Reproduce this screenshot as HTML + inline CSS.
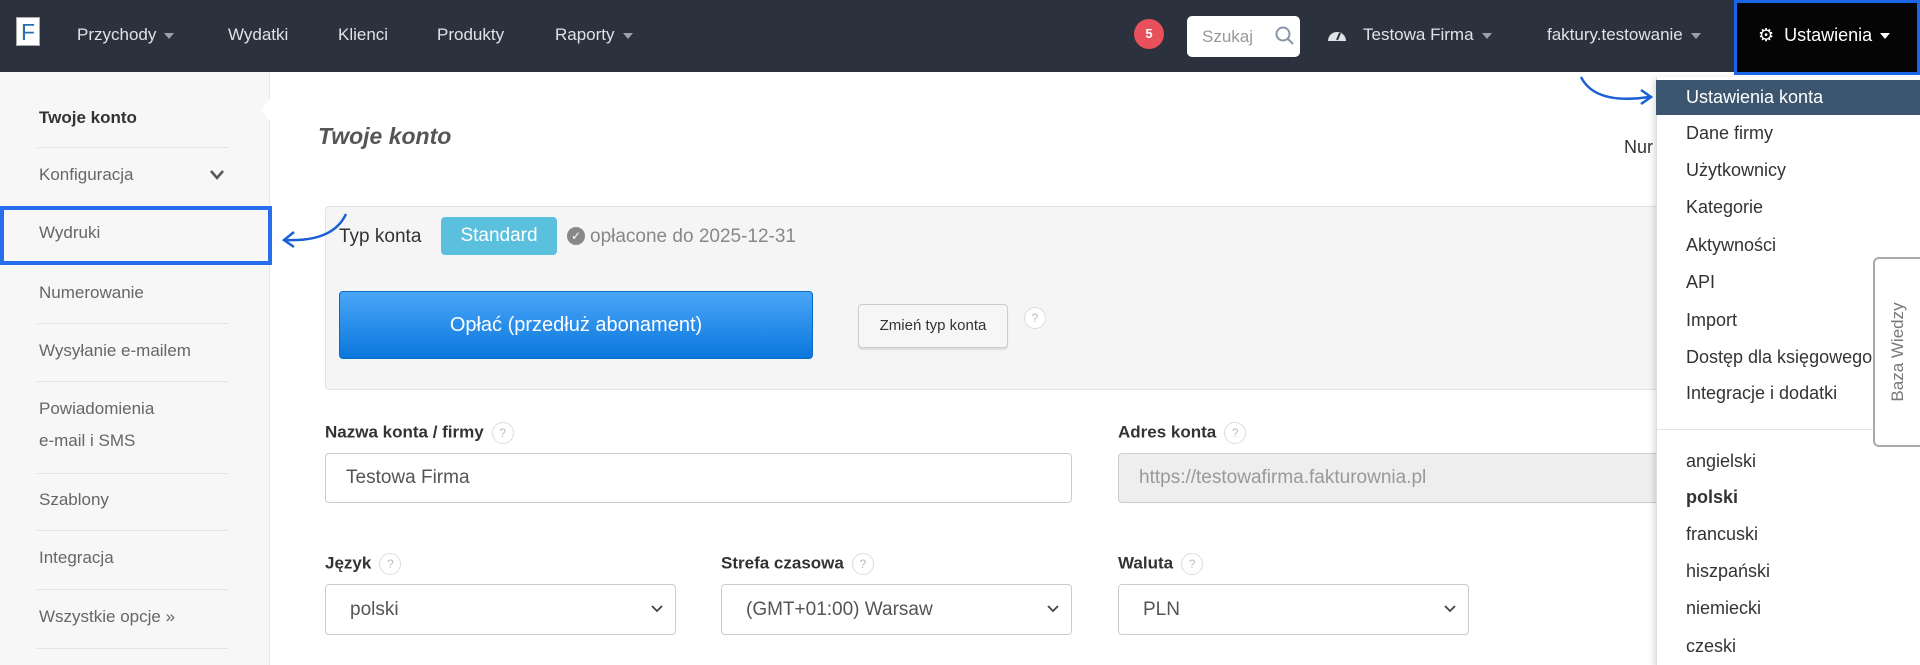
<!DOCTYPE html>
<html><head><meta charset="utf-8"><style>
*{box-sizing:border-box;margin:0;padding:0}
body{width:1920px;height:665px;overflow:hidden;background:#fff;font-family:"Liberation Sans",Arial,sans-serif;position:relative;color:#333}
.a{position:absolute;white-space:nowrap}
.nav{left:0;top:0;width:1920px;height:72px;background:#2b323d}
.nl{color:#dfe3e8;font-size:17px;top:25px}
.car{display:inline-block;border-left:5px solid transparent;border-right:5px solid transparent;border-top:6px solid #9aa1aa;margin-left:8px;vertical-align:middle}
.side{left:0;top:72px;width:270px;height:593px;background:#f7f7f7;border-right:1px solid #e6e6e6}
.si{left:39px;font-size:17px;color:#666}
.sep{left:37px;width:191px;height:1px;background:#e3e3e3}
.lbl{font-size:17px;font-weight:bold;color:#333}
.q{display:inline-block;width:22px;height:22px;border:1px solid #ddd;border-radius:50%;font-size:12px;color:#bbb;text-align:center;line-height:20px;font-weight:normal;margin-left:8px;vertical-align:middle}
.inp{border:1px solid #ccc;border-radius:4px;background:#fff;font-size:19px;color:#555;padding-left:20px}
.dd{color:#333;font-size:18px;left:1686px}
</style></head><body>
<div class="a nav"></div>
<div class="a" style="left:16px;top:17px;width:24px;height:29px;background:#fff;border:1px solid #aaa;color:#2a6fb0;font-size:23px;text-align:center;line-height:29px">F</div>
<div class="a nl" style="left:77px">Przychody<span class="car"></span></div>
<div class="a nl" style="left:228px">Wydatki</div>
<div class="a nl" style="left:338px">Klienci</div>
<div class="a nl" style="left:437px">Produkty</div>
<div class="a nl" style="left:555px">Raporty<span class="car"></span></div>
<div class="a" style="left:1134px;top:19px;width:30px;height:30px;border-radius:50%;background:#e8505b;color:#fff;font-weight:bold;font-size:13px;text-align:center;line-height:30px">5</div>
<div class="a" style="left:1187px;top:16px;width:113px;height:41px;background:#fff;border-radius:5px;color:#999;font-size:17px;padding:11px 0 0 15px">Szukaj</div>
<svg class="a" style="left:1275px;top:26px" width="20" height="20"><circle cx="8" cy="8" r="6.5" stroke="#8a95a5" stroke-width="2" fill="none"/><line x1="13" y1="13" x2="18" y2="18" stroke="#8a95a5" stroke-width="2"/></svg>
<svg class="a" style="left:1327px;top:26px" width="20" height="16"><path d="M1 15 A9 9 0 0 1 19 15 Z" fill="#dfe3e8"/><line x1="10" y1="14" x2="13" y2="7" stroke="#2b323d" stroke-width="2"/></svg>
<div class="a nl" style="left:1363px">Testowa Firma<span class="car"></span></div>
<div class="a nl" style="left:1547px">faktury.testowanie<span class="car"></span></div>
<div class="a" style="left:1734px;top:0;width:186px;height:75px;background:#050505;border:3px solid #1a66e6"></div>
<div class="a" style="left:1758px;top:25px;color:#fff;font-size:18px">⚙&nbsp;&nbsp;Ustawienia<span class="car" style="border-top-color:#fff"></span></div>

<div class="a side"></div>
<div class="a" style="left:261px;top:98px;width:0;height:0;border-top:12px solid transparent;border-bottom:12px solid transparent;border-right:10px solid #fff"></div>
<div class="a si" style="top:108px;font-weight:bold;color:#333">Twoje konto</div>
<div class="a sep" style="top:147px"></div>
<div class="a si" style="top:165px">Konfiguracja</div>
<svg class="a" style="left:210px;top:170px" width="14" height="10"><path d="M1 1 L7 8 L13 1" stroke="#555" stroke-width="2.5" fill="none"/></svg>
<div class="a sep" style="top:206px"></div>
<div class="a si" style="top:223px">Wydruki</div>
<div class="a" style="left:0;top:206px;width:272px;height:59px;border:4px solid #2a6ef0"></div>
<div class="a si" style="top:283px">Numerowanie</div>
<div class="a sep" style="top:323px"></div>
<div class="a si" style="top:341px">Wysyłanie e-mailem</div>
<div class="a sep" style="top:381px"></div>
<div class="a si" style="top:399px">Powiadomienia</div>
<div class="a si" style="top:431px">e-mail i SMS</div>
<div class="a sep" style="top:473px"></div>
<div class="a si" style="top:490px">Szablony</div>
<div class="a sep" style="top:530px"></div>
<div class="a si" style="top:548px">Integracja</div>
<div class="a sep" style="top:589px"></div>
<div class="a si" style="top:607px">Wszystkie opcje »</div>
<div class="a sep" style="top:648px"></div>

<div class="a" style="left:318px;top:123px;font-size:23px;font-style:italic;font-weight:bold;color:#555">Twoje konto</div>
<div class="a" style="left:1624px;top:137px;font-size:18px;color:#333">Nur</div>
<div class="a" style="left:325px;top:206px;width:1340px;height:184px;background:#f5f5f5;border:1px solid #e3e3e3;border-radius:4px"></div>
<div class="a" style="left:339px;top:226px;font-size:19px;color:#333">Typ konta</div>
<div class="a" style="left:441px;top:217px;width:116px;height:38px;background:#5bc0de;border-radius:4px;color:#fff;font-size:19px;text-align:center;line-height:38px">Standard</div>
<div class="a" style="left:567px;top:227px;width:18px;height:18px;border-radius:50%;background:#888;color:#fff;font-size:12px;text-align:center;line-height:18px">✓</div>
<div class="a" style="left:590px;top:226px;font-size:19px;color:#888">opłacone do 2025-12-31</div>
<div class="a" style="left:339px;top:291px;width:474px;height:68px;border-radius:4px;background:linear-gradient(#4aa6f8,#0a77dc);border:1px solid #0a6bc4;color:#fff;font-size:20px;text-align:center;line-height:66px">Opłać (przedłuż abonament)</div>
<div class="a" style="left:858px;top:304px;width:150px;height:44px;border-radius:4px;background:#f6f6f6;border:1px solid #ccc;box-shadow:0 2px 1px #ddd;font-size:15px;text-align:center;line-height:42px;color:#333">Zmień typ konta</div>
<div class="a" style="left:1016px;top:307px"><span class="q" style="background:#fff">?</span></div>

<div class="a lbl" style="left:325px;top:422px">Nazwa konta / firmy<span class="q">?</span></div>
<div class="a inp" style="left:325px;top:453px;width:747px;height:50px;line-height:48px">Testowa Firma</div>
<div class="a lbl" style="left:1118px;top:422px">Adres konta<span class="q">?</span></div>
<div class="a inp" style="left:1118px;top:453px;width:560px;height:50px;line-height:48px;background:#eee;color:#999">https://testowafirma.fakturownia.pl</div>

<div class="a lbl" style="left:325px;top:553px">Język<span class="q">?</span></div>
<div class="a lbl" style="left:721px;top:553px">Strefa czasowa<span class="q">?</span></div>
<div class="a lbl" style="left:1118px;top:553px">Waluta<span class="q">?</span></div>
<div class="a inp" style="left:325px;top:584px;width:351px;height:51px;line-height:49px;padding-left:24px">polski</div>
<div class="a inp" style="left:721px;top:584px;width:351px;height:51px;line-height:49px;padding-left:24px">(GMT+01:00) Warsaw</div>
<div class="a inp" style="left:1118px;top:584px;width:351px;height:51px;line-height:49px;padding-left:24px">PLN</div>
<svg class="a" style="left:650px;top:604px" width="14" height="10"><path d="M2 2 L7 7 L12 2" stroke="#444" stroke-width="1.8" fill="none"/></svg>
<svg class="a" style="left:1046px;top:604px" width="14" height="10"><path d="M2 2 L7 7 L12 2" stroke="#444" stroke-width="1.8" fill="none"/></svg>
<svg class="a" style="left:1443px;top:604px" width="14" height="10"><path d="M2 2 L7 7 L12 2" stroke="#444" stroke-width="1.8" fill="none"/></svg>

<div class="a" style="left:1656px;top:77px;width:264px;height:588px;background:#fff;border-left:1px solid #ddd;box-shadow:-2px 2px 6px rgba(0,0,0,.15)"></div>
<div class="a" style="left:1656px;top:80px;width:264px;height:35px;background:#3c5670"></div>
<div class="a dd" style="top:87px;color:#fff">Ustawienia konta</div>
<div class="a dd" style="top:123px">Dane firmy</div>
<div class="a dd" style="top:160px">Użytkownicy</div>
<div class="a dd" style="top:197px">Kategorie</div>
<div class="a dd" style="top:235px">Aktywności</div>
<div class="a dd" style="top:272px">API</div>
<div class="a dd" style="top:310px">Import</div>
<div class="a dd" style="top:347px">Dostęp dla księgowego</div>
<div class="a dd" style="top:383px">Integracje i dodatki</div>
<div class="a" style="left:1656px;top:429px;width:264px;height:1px;background:#e5e5e5"></div>
<div class="a dd" style="top:451px">angielski</div>
<div class="a dd" style="top:487px;font-weight:bold">polski</div>
<div class="a dd" style="top:524px">francuski</div>
<div class="a dd" style="top:561px">hiszpański</div>
<div class="a dd" style="top:598px">niemiecki</div>
<div class="a dd" style="top:636px">czeski</div>
<div class="a" style="left:1873px;top:257px;width:50px;height:190px;background:#fff;border:2px solid #aaa;border-radius:6px 0 0 6px"></div>
<div class="a" style="left:1898px;top:352px;transform:translate(-50%,-50%) rotate(-90deg);font-size:17px;color:#777">Baza Wiedzy</div>

<svg class="a" style="left:1575px;top:75px" width="85" height="35"><path d="M6 2 Q20 30 74 22" stroke="#1a5fd6" stroke-width="2.5" fill="none"/><path d="M66 15 L76 22 L66 29" stroke="#1a5fd6" stroke-width="2.5" fill="none"/></svg>
<svg class="a" style="left:278px;top:212px" width="72" height="38"><path d="M68 2 Q55 30 8 28" stroke="#1a5fd6" stroke-width="2.5" fill="none"/><path d="M16 20 L6 28 L16 35" stroke="#1a5fd6" stroke-width="2.5" fill="none"/></svg>
</body></html>
